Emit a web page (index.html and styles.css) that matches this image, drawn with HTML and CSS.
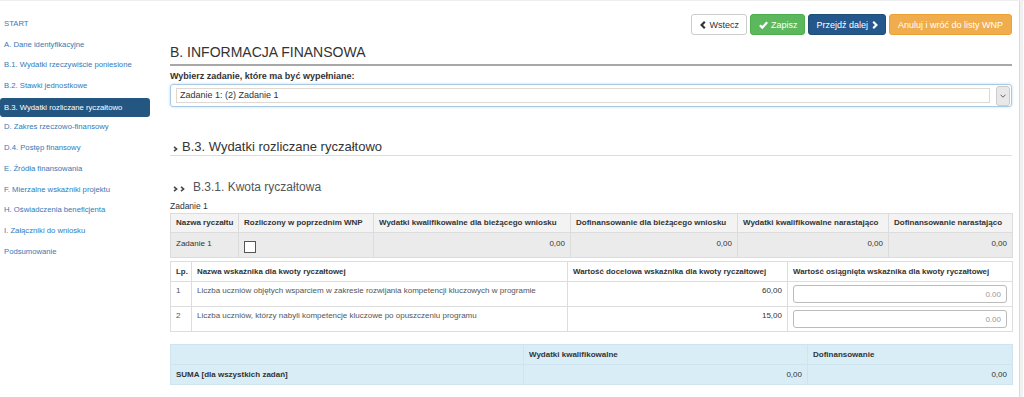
FILE: index.html
```html
<!DOCTYPE html>
<html lang="pl">

<head>
  <meta charset="UTF-8">
  <meta name="viewport" content="width=device-width, initial-scale=1.0">
  <title>Informacja finansowa</title>
  <link rel="stylesheet" href="styles.css">
</head>

<body>
  <div class="page">
    <nav class="sidebar">
      <a href="#">START</a>
      <a href="#">A. Dane identyfikacyjne</a>
      <a href="#">B.1. Wydatki rzeczywiście poniesione</a>
      <a href="#">B.2. Stawki jednostkowe</a>
      <a href="#" class="active">B.3. Wydatki rozliczane ryczałtowo</a>
      <a href="#">D. Zakres rzeczowo-finansowy</a>
      <a href="#">D.4. Postęp finansowy</a>
      <a href="#">E. Źródła finansowania</a>
      <a href="#">F. Mierzalne wskaźniki projektu</a>
      <a href="#">H. Oświadczenia beneficjenta</a>
      <a href="#">I. Załączniki do wniosku</a>
      <a href="#">Podsumowanie</a>
    </nav>

    <main class="content">
      <div class="toolbar">
        <button class="btn btn_default" type="button">
          <svg width="6" height="8" viewBox="0 0 6 8"><polyline points="4.8,0.8 1.6,4 4.8,7.2" fill="none" stroke="#333" stroke-width="2.2"/></svg>
          <span>Wstecz</span>
        </button>
        <button class="btn btn_success" type="button">
          <svg width="9" height="8" viewBox="0 0 9 8"><polyline points="0.9,4.2 3.3,6.6 8.2,1.2" fill="none" stroke="#fff" stroke-width="2.3"/></svg>
          <span>Zapisz</span>
        </button>
        <button class="btn btn_primary" type="button">
          <span>Przejdź dalej</span>
          <svg width="6" height="8" viewBox="0 0 6 8"><polyline points="1.2,0.8 4.4,4 1.2,7.2" fill="none" stroke="#fff" stroke-width="2.2"/></svg>
        </button>
        <button class="btn btn_warning" type="button">Anuluj i wróć do listy WNP</button>
      </div>

      <h3 class="section_title">B. INFORMACJA FINANSOWA</h3>

      <label class="field_label">Wybierz zadanie, które ma być wypełniane:</label>
      <div class="select_box">
        <span class="select_value">Zadanie 1: (2) Zadanie 1</span>
        <span class="select_arrow">
          <svg width="6" height="4" viewBox="0 0 6 4"><polyline points="0.5,0.7 3,3.2 5.5,0.7" fill="none" stroke="#666" stroke-width="1"/></svg>
        </span>
      </div>

      <h4 class="sub_title">
        <svg class="chev" width="5" height="6" viewBox="0 0 5 6"><polyline points="1,0.8 3.6,3 1,5.2" fill="none" stroke="#444" stroke-width="1.6"/></svg>
        <span>B.3. Wydatki rozliczane ryczałtowo</span>
      </h4>

      <h5 class="subsub_title">
        <svg class="chev" width="5" height="6" viewBox="0 0 5 6"><polyline points="1,0.8 3.6,3 1,5.2" fill="none" stroke="#444" stroke-width="1.6"/></svg>
        <svg class="chev" width="5" height="6" viewBox="0 0 5 6"><polyline points="1,0.8 3.6,3 1,5.2" fill="none" stroke="#444" stroke-width="1.6"/></svg>
        <span>B.3.1. Kwota ryczałtowa</span>
      </h5>

      <div class="task_name">Zadanie 1</div>

      <!-- ryczałty -->
      <table class="tbl tbl_gray">
        <colgroup>
          <col style="width:68px">
          <col style="width:135px">
          <col style="width:197px">
          <col style="width:167px">
          <col style="width:151px">
          <col style="width:124px">
        </colgroup>
        <tr class="head_row">
          <th>Nazwa ryczałtu</th>
          <th>Rozliczony w poprzednim WNP</th>
          <th>Wydatki kwalifikowalne dla bieżącego wniosku</th>
          <th>Dofinansowanie dla bieżącego wniosku</th>
          <th>Wydatki kwalifikowalne narastająco</th>
          <th>Dofinansowanie narastająco</th>
        </tr>
        <tr class="data_row">
          <td>Zadanie 1</td>
          <td><span class="checkbox"></span></td>
          <td class="num">0,00</td>
          <td class="num">0,00</td>
          <td class="num">0,00</td>
          <td class="num">0,00</td>
        </tr>
      </table>

      <!-- wskaźniki -->
      <table class="tbl tbl_plain">
        <colgroup>
          <col style="width:21px">
          <col style="width:376px">
          <col style="width:220px">
          <col style="width:225px">
        </colgroup>
        <tr class="head_row">
          <th>Lp.</th>
          <th>Nazwa wskaźnika dla kwoty ryczałtowej</th>
          <th>Wartość docelowa wskaźnika dla kwoty ryczałtowej</th>
          <th>Wartość osiągnięta wskaźnika dla kwoty ryczałtowej</th>
        </tr>
        <tr class="data_row">
          <td>1</td>
          <td>Liczba uczniów objętych wsparciem w zakresie rozwijania kompetencji kluczowych w programie</td>
          <td class="num">60,00</td>
          <td class="input_cell"><input type="text" placeholder="0.00"></td>
        </tr>
        <tr class="data_row">
          <td>2</td>
          <td>Liczba uczniów, którzy nabyli kompetencje kluczowe po opuszczeniu programu</td>
          <td class="num">15,00</td>
          <td class="input_cell"><input type="text" placeholder="0.00"></td>
        </tr>
      </table>

      <!-- suma -->
      <table class="tbl tbl_info">
        <colgroup>
          <col style="width:353px">
          <col style="width:284px">
          <col style="width:205px">
        </colgroup>
        <tr class="head_row">
          <th></th>
          <th>Wydatki kwalifikowalne</th>
          <th>Dofinansowanie</th>
        </tr>
        <tr class="sum_row">
          <th>SUMA [dla wszystkich zadań]</th>
          <td class="num">0,00</td>
          <td class="num">0,00</td>
        </tr>
      </table>
    </main>

    <div class="edge"></div>
  </div>
</body>

</html>
```

FILE: styles.css
```css
/* 기본 */
* {
  box-sizing: border-box;
}

body {
  margin: 0;
  font-family: "Liberation Sans", Arial, sans-serif;
  color: #333;
  background-color: #fff;
  border-top: 1px solid #eeeeee;
}

.page {
  display: flex;
  min-height: 396px;
}

/* 사이드바 */
.sidebar {
  width: 150px;
  flex-shrink: 0;
  padding-top: 13px;
}

.sidebar a {
  display: block;
  height: 20.7px;
  line-height: 20.7px;
  padding: 0 4px;
  font-size: 7.7px;
  color: #337ab7;
  text-decoration: none;
  border-radius: 3px;
}

.sidebar a.active {
  height: 19px;
  line-height: 19px;
  margin: 1px 0 0.7px;
  background-color: #245682;
  color: #fff;
}

.content {
  width: 842px;
  flex-shrink: 0;
  margin-left: 20px;
}

.edge {
  width: 4px;
  margin-left: 7px;
  background-color: #f1f1f1;
  border-left: 1px solid #dadada;
}

/* 버튼 */
.toolbar {
  display: flex;
  justify-content: flex-end;
  gap: 3px;
  margin-top: 13px;
}

.btn {
  display: inline-flex;
  align-items: center;
  gap: 4px;
  height: 21px;
  padding: 0 8px;
  font-family: inherit;
  font-size: 9px;
  border: 1px solid transparent;
  border-radius: 3px;
  color: #fff;
}

.btn_default {
  background-color: #fff;
  border-color: #ccc;
  color: #333;
  padding: 0 7px 0 8px;
  gap: 3px;
}

.btn_success {
  background-color: #5cb85c;
  border-color: #4cae4c;
  gap: 3px;
  padding: 0 7px 0 8px;
}

.btn_primary {
  background-color: #24578c;
  border-color: #204d74;
  padding: 0 7px;
}

.btn_warning {
  background-color: #f0ad4e;
  border-color: #eea236;
}

/* 제목 */
.section_title {
  margin: 9px 0 0;
  font-size: 14px;
  font-weight: normal;
  line-height: 17px;
  padding-bottom: 3px;
  border-bottom: 2px solid #a8a8a8;
}

.field_label {
  display: block;
  margin-top: 5px;
  font-size: 9px;
  font-weight: bold;
  line-height: 11px;
}

.select_box {
  display: flex;
  align-items: center;
  gap: 6px;
  height: 23px;
  margin-top: 2px;
  padding: 0 1px 0 5px;
  border: 1px solid #a9c8e4;
  border-radius: 3px;
  box-shadow: 0 0 3px rgba(102, 175, 233, 0.45);
}

.select_value {
  flex: 1;
  height: 15px;
  line-height: 13px;
  padding: 0 3px;
  font-size: 9px;
  border: 1px solid #e0d9d2;
}

.select_arrow {
  display: flex;
  align-items: center;
  justify-content: center;
  width: 14px;
  height: 20px;
  background-color: #e8e8e8;
  border: 1px solid #ccc;
  border-radius: 3px;
}

.sub_title,
.subsub_title {
  display: flex;
  align-items: center;
  font-weight: normal;
}

.sub_title {
  gap: 4px;
  margin: 32px 0 0;
  padding-left: 3px;
  font-size: 13px;
  line-height: 16px;
  color: #333;
  border-bottom: 1px solid #dddddd;
}

.subsub_title {
  gap: 2px;
  margin: 24px 0 0;
  padding-left: 3px;
  font-size: 12px;
  line-height: 14px;
  color: #555;
}

.chev {
  margin-top: 3px;
}

.subsub_title span {
  margin-left: 6px;
}

.task_name {
  margin-top: 7px;
  font-size: 8.5px;
  line-height: 10px;
}

/* 테이블 */
.tbl {
  width: 842px;
  table-layout: fixed;
  border-collapse: collapse;
  font-size: 8px;
  line-height: 10px;
}

.tbl th,
.tbl td {
  padding: 0 5px;
  text-align: left;
  overflow: hidden;
  white-space: nowrap;
}

.tbl th {
  font-weight: bold;
}

.tbl .num {
  text-align: right;
}

.tbl_gray {
  margin-top: 2px;
}

.tbl_gray th,
.tbl_gray td {
  border: 1px solid #dcdcdc;
}

.tbl_gray .head_row {
  height: 19px;
  background-color: #f3f3f3;
}

.tbl_gray .data_row {
  height: 25px;
  background-color: #ebebeb;
}

.tbl_gray .data_row td {
  vertical-align: top;
  padding-top: 6px;
}

.checkbox {
  display: block;
  width: 12px;
  height: 12px;
  margin-top: 2px;
  background-color: #fff;
  border: 1px solid #555;
}

.tbl_plain {
  margin-top: 3px;
}

.tbl_plain th,
.tbl_plain td {
  border: 1px solid #dddddd;
}

.tbl_plain th {
  font-size: 7.9px;
}

.tbl_plain .head_row {
  height: 20px;
}

.tbl_plain .data_row {
  height: 25px;
}

.tbl_plain .data_row td {
  vertical-align: top;
  padding-top: 4px;
  color: #555;
}

.tbl_plain .data_row td.num {
  color: #333;
}

.tbl_plain td.input_cell {
  padding: 3px 5px 0;
}

.input_cell input {
  display: block;
  width: 100%;
  height: 18px;
  padding: 0 5px;
  font-family: inherit;
  font-size: 8px;
  text-align: right;
  border: 1px solid #bbb;
  border-radius: 3px;
}

.input_cell input::placeholder {
  color: #999;
}

.tbl_info {
  margin-top: 12px;
  background-color: #d9edf7;
}

.tbl_info th,
.tbl_info td {
  border: 1px solid #cfe4ef;
}

.tbl_info .head_row {
  height: 20px;
}

.tbl_info .sum_row {
  height: 20px;
}
```
